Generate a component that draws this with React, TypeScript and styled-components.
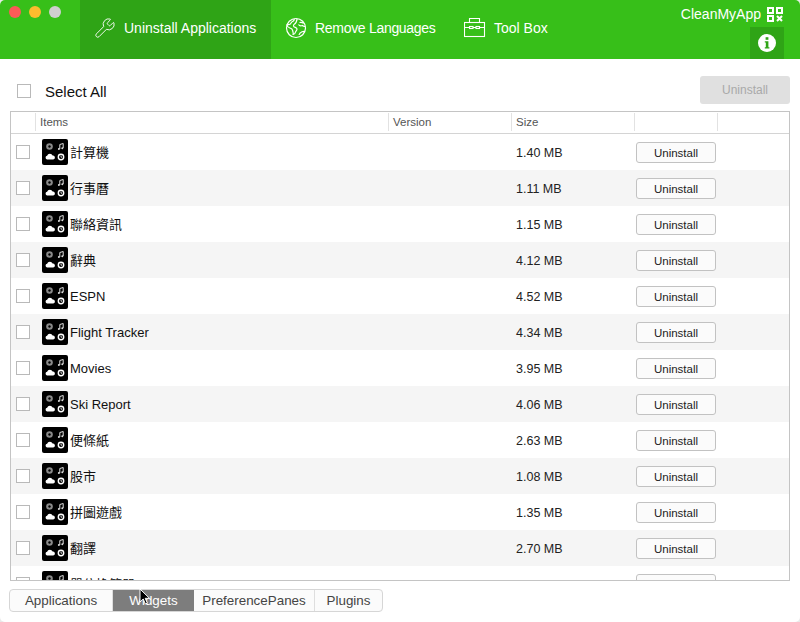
import React from "react";
import styled, { createGlobalStyle } from "styled-components";
import { Wrench } from "lucide-react";

const GlobalStyle = createGlobalStyle`
  html, body {
    margin: 0;
    padding: 0;
    background: #e9e9e9;
  }
  * {
    box-sizing: border-box;
  }
`;

const Window = styled.div`
  position: relative;
  width: 800px;
  height: 622px;
  overflow: hidden;
  background: #fff;
  border-radius: 5px;
  font-family: "Liberation Sans", "Noto Sans CJK TC", sans-serif;
  color: #222;
`;

const Header = styled.header`
  display: flex;
  height: 59px;
  background: #37bf19;
  color: #fff;
`;

const Traffic = styled.div`
  display: flex;
  gap: 8px;
  width: 80px;
  padding: 6px 0 0 9px;
`;

const Light = styled.span<{ $color: string }>`
  width: 12px;
  height: 12px;
  border-radius: 50%;
  background: ${(p) => p.$color};
`;

const Tabs = styled.nav`
  display: flex;
  flex: 1;
`;

const Tab = styled.div<{ $active?: boolean; $width: number; $tracking?: number }>`
  display: flex;
  align-items: center;
  gap: 8px;
  width: ${(p) => p.$width}px;
  padding: 0 0 3px 14px;
  font-size: 14px;
  letter-spacing: ${(p) => p.$tracking ?? 0}px;
  background: ${(p) => (p.$active ? "#2fa416" : "transparent")};
`;

const Side = styled.div`
  display: flex;
  flex-direction: column;
  align-items: flex-end;
  width: 120px;
  padding: 7px 16px 0 0;
`;

const Brand = styled.div`
  display: flex;
  align-items: center;
  gap: 6px;
  height: 14px;
  margin-right: 1px;
  font-size: 14px;
  white-space: nowrap;
`;

const InfoBox = styled.div`
  display: flex;
  align-items: center;
  justify-content: center;
  width: 34px;
  height: 32px;
  margin-top: 6px;
  background: #2fa416;
`;

const Toolbar = styled.div`
  display: flex;
  align-items: center;
  justify-content: space-between;
  height: 52px;
  padding: 10px 10px 0 17px;
`;

const SelectAll = styled.label`
  display: flex;
  align-items: center;
  gap: 14px;
  margin-top: 2px;
  font-size: 15px;
  color: #111;
`;

const Check = styled.span`
  display: block;
  flex: none;
  width: 14px;
  height: 14px;
  background: #fff;
  border: 1px solid #b9b9b9;
`;

const BigButton = styled.button`
  width: 90px;
  height: 28px;
  border: none;
  border-radius: 3px;
  background: #e0e0e0;
  color: #a9a9a9;
  font: 12px "Liberation Sans", sans-serif;
`;

const Table = styled.div`
  margin: 0 10px;
  height: 470px;
  overflow: hidden;
  border: 1px solid #c4c4c4;
`;

const columns = "25px 353px 123px 123px 83px 1fr";

const HeadRow = styled.div`
  display: grid;
  grid-template-columns: ${columns};
  height: 22px;
  border-bottom: 1px solid #d4d4d4;
`;

const HeadCell = styled.div`
  display: flex;
  align-items: center;
  height: 18px;
  margin-top: 1px;
  padding-left: 4px;
  font-size: 11.5px;
  color: #555;
  border-right: 1px solid #e2e2e2;
  &:last-child {
    border-right: none;
  }
`;

const Row = styled.div<{ $odd: boolean }>`
  display: grid;
  grid-template-columns: ${columns};
  align-items: center;
  height: 36px;
  background: ${(p) => (p.$odd ? "#f5f5f5" : "#fff")};
`;

const CheckCell = styled.div`
  padding-left: 5px;
`;

const ItemCell = styled.div`
  display: flex;
  align-items: center;
  gap: 2px;
  padding: 0 0 1px 6px;
  font-size: 13px;
  line-height: 18px;
  color: #111;
`;

const ItemName = styled.span`
  padding-top: 3px;
`;

const SizeCell = styled.div`
  grid-column: 4;
  padding: 1px 0 0 4px;
  font-size: 12.5px;
  color: #222;
`;

const RowButton = styled.button`
  width: 80px;
  height: 21px;
  margin: 1px 0 0 1px;
  padding: 0;
  border: 1px solid #c2c2c2;
  border-radius: 3px;
  background: #fbfbfb;
  color: #222;
  font: 11.5px "Liberation Sans", sans-serif;
`;

const Footer = styled.div`
  display: flex;
  margin: 8px 0 0 9px;
  width: 374px;
  height: 23px;
  border: 1px solid #d6d6d6;
  border-radius: 4px;
  overflow: hidden;
  background: #fbfbfb;
`;

const FooterTab = styled.div<{ $active?: boolean; $width: number }>`
  display: flex;
  align-items: center;
  justify-content: center;
  width: ${(p) => p.$width}px;
  font-size: 13.4px;
  color: ${(p) => (p.$active ? "#fff" : "#444")};
  background: ${(p) => (p.$active ? "#7d7d7d" : "transparent")};
  border-right: ${(p) => (p.$active ? "none" : "1px solid #dedede")};
  &:last-child {
    border-right: none;
  }
`;

const Cursor = styled.svg`
  position: absolute;
  left: 139px;
  top: 588px;
`;

const GlobeIcon = () => (
  <svg width="22" height="22" viewBox="0 0 22 22" fill="none" stroke="#fff" strokeWidth="1.2">
    <circle cx="11" cy="11" r="9.500" />
    <path d="M9 1.800c.6 1.200-.3 2.200-1.500 2.700-1.600.7-1.300 2-2.600 2.800-.8.500-2 .3-3 .7.300 1.800 1.600 2.600 3 3 1.500.4 2.500 1 2.700 2.400.2 1.500 1 2.500.5 4 1.500.2 2-1 2.400-2.300.4-1.200 1.600-1.800 1.500-3.100-.1-1.400-2-1.500-3-2.300-.8-.7-.6-2 .3-2.500 1.300-.7 2.300-2 2.800-5.300" />
    <path d="M14.500 5.500c1.500-.3 3-.2 4 .8M13.500 7.500c.8 1.200 2.500 1.500 3.800 1 .9.900 2.200 1 3.100.8" />
    <path d="M14 18c.3-1.500 1.500-2.600 3-3.200 1-.4 1.800-.5 3-.3" />
  </svg>
);

const ToolBoxIcon = () => (
  <svg width="22" height="20" viewBox="0 0 22 20" fill="none" stroke="#fff" strokeWidth="1.100">
    <rect x="0.500" y="4.500" width="20" height="14" />
    <path d="M5.500 4.500v-4h10v4M0.500 9.500h5M9 9.500h3M15.500 9.500h5" />
    <rect x="5.500" y="8.500" width="3.500" height="2" />
    <rect x="12" y="8.500" width="3.500" height="2" />
  </svg>
);

const QrIcon = () => (
  <svg width="16" height="15" viewBox="0 0 16 15" fill="none" stroke="#fff" strokeWidth="2">
    <rect x="1" y="1" width="5" height="5" />
    <rect x="10" y="1" width="5" height="5" />
    <rect x="1" y="9" width="5" height="5" />
    <path d="M10 9l5 5M15 9l-5 5" />
  </svg>
);

const InfoIcon = () => (
  <svg width="18" height="18" viewBox="0 0 18 18">
    <circle cx="9" cy="9" r="9" fill="#fff" />
    <rect x="7.600" y="3.200" width="2.800" height="2.600" fill="#2fa416" />
    <path d="M6.800 7.200h3.600v6h1v1.400H6.800v-1.400h1v-4.600h-1z" fill="#2fa416" />
  </svg>
);

const WidgetIcon = () => (
  <svg width="26" height="26" viewBox="0 0 26 26">
    <rect width="26" height="26" rx="2" fill="#000" />
    <circle cx="7.500" cy="7.500" r="3.300" fill="#8a8a8a" />
    <circle cx="7.500" cy="7.500" r="1.200" fill="#000" />
    <path d="M17.800 10V5.500l3.400-1V9" fill="none" stroke="#ddd" strokeWidth="1" />
    <circle cx="16.900" cy="10" r="1" fill="#ddd" />
    <circle cx="20.300" cy="9.200" r="1" fill="#ddd" />
    <path d="M5 20.500a1.900 1.900 0 0 1 .1-3.700 3 3 0 0 1 5.500-.3 2 2 0 0 1 .6 4z" fill="#fff" />
    <circle cx="19" cy="18" r="2.700" fill="none" stroke="#fff" strokeWidth="1.400" />
    <path d="M19 16.500v1.700h1.200" fill="none" stroke="#fff" strokeWidth="0.800" />
  </svg>
);

const items: [string, string][] = [
  ["計算機", "1.40 MB"],
  ["行事曆", "1.11 MB"],
  ["聯絡資訊", "1.15 MB"],
  ["辭典", "4.12 MB"],
  ["ESPN", "4.52 MB"],
  ["Flight Tracker", "4.34 MB"],
  ["Movies", "3.95 MB"],
  ["Ski Report", "4.06 MB"],
  ["便條紙", "2.63 MB"],
  ["股市", "1.08 MB"],
  ["拼圖遊戲", "1.35 MB"],
  ["翻譯", "2.70 MB"],
  ["單位換算器", ""],
];

const App: React.FC = () => (
  <Window>
    <GlobalStyle />
    <Header>
      <Traffic>
        <Light $color="#fc5b57" />
        <Light $color="#fdbc2e" />
        <Light $color="#cfcfcf" />
      </Traffic>
      <Tabs>
        <Tab $active $width={191}>
          <Wrench size={22} strokeWidth={1} />
          Uninstall Applications
        </Tab>
        <Tab $width={179} $tracking={-0.3}>
          <GlobeIcon />
          Remove Languages
        </Tab>
        <Tab $width={130}>
          <ToolBoxIcon />
          Tool Box
        </Tab>
      </Tabs>
      <Side>
        <Brand>
          CleanMyApp
          <QrIcon />
        </Brand>
        <InfoBox>
          <InfoIcon />
        </InfoBox>
      </Side>
    </Header>
    <Toolbar>
      <SelectAll>
        <Check />
        Select All
      </SelectAll>
      <BigButton>Uninstall</BigButton>
    </Toolbar>
    <Table>
      <HeadRow>
        <HeadCell />
        <HeadCell>Items</HeadCell>
        <HeadCell>Version</HeadCell>
        <HeadCell>Size</HeadCell>
        <HeadCell />
        <HeadCell />
      </HeadRow>
      {items.map(([name, size], i) => (
        <Row key={name} $odd={i % 2 === 1}>
          <CheckCell>
            <Check />
          </CheckCell>
          <ItemCell>
            <WidgetIcon />
            <ItemName>{name}</ItemName>
          </ItemCell>
          <SizeCell>{size}</SizeCell>
          <RowButton>Uninstall</RowButton>
        </Row>
      ))}
    </Table>
    <Footer>
      <FooterTab $width={103}>Applications</FooterTab>
      <FooterTab $active $width={81}>Widgets</FooterTab>
      <FooterTab $width={121}>PreferencePanes</FooterTab>
      <FooterTab $width={67}>Plugins</FooterTab>
    </Footer>
    <Cursor width="12" height="18" viewBox="0 0 12 18">
      <path d="M1 1v13l3.200-3 2.200 5 2-.9-2.200-4.800H10.500z" fill="#000" stroke="#fff" strokeWidth="1" />
    </Cursor>
  </Window>
);

export default App;
